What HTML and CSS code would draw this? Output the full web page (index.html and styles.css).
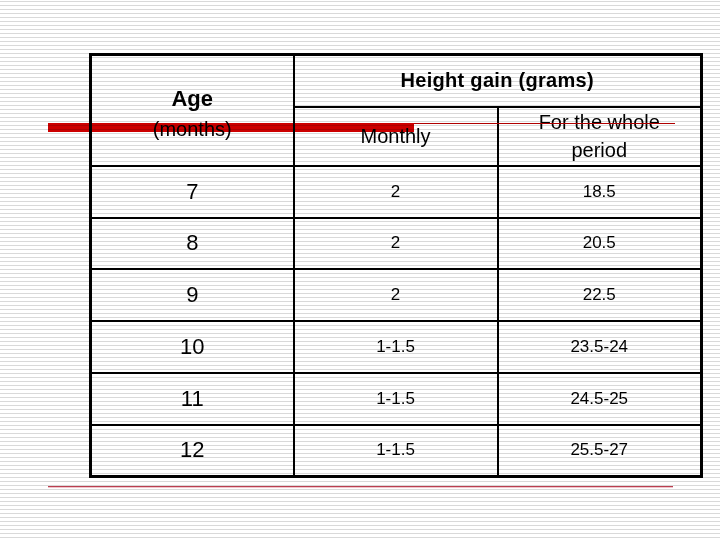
FILE: index.html
```html
<!DOCTYPE html>
<html>
<head>
<meta charset="utf-8">
<link rel="stylesheet" href="styles.css">
</head>
<body>
<div class="slide">
  <table class="gain">
    <colgroup><col class="c1"><col class="c2"><col class="c3"></colgroup>
    <thead>
      <tr class="h1">
        <th rowspan="2" class="age"><span class="age-t">Age</span><br><span class="age-s">(months)</span></th>
        <th colspan="2" class="title">Height gain (grams)</th>
      </tr>
      <tr class="h2">
        <th class="sub">Monthly</th>
        <th class="sub">For the whole<br>period</th>
      </tr>
    </thead>
    <tbody>
      <tr><td class="m">7</td><td>2</td><td>18.5</td></tr>
      <tr class="short"><td class="m">8</td><td>2</td><td>20.5</td></tr>
      <tr><td class="m">9</td><td>2</td><td>22.5</td></tr>
      <tr><td class="m">10</td><td>1-1.5</td><td>23.5-24</td></tr>
      <tr><td class="m">11</td><td>1-1.5</td><td>24.5-25</td></tr>
      <tr><td class="m">12</td><td>1-1.5</td><td>25.5-27</td></tr>
    </tbody>
  </table>
  <div class="bar-thick"></div>
  <div class="bar-thin"></div>
  <div class="bar-bottom"></div>
</div>
</body>
</html>
```
FILE: styles.css
```css
html, body {
  margin: 0;
  padding: 0;
}
body {
  width: 720px;
  height: 540px;
  overflow: hidden;
  background: repeating-linear-gradient(to bottom, #ffffff 0 1px, #d9d9d9 1px 2px, #ffffff 2px 4px);
  font-family: "Liberation Sans", Arial, sans-serif;
  color: #000;
}
.slide {
  position: relative;
  width: 720px;
  height: 540px;
  padding: 53px 0 0 89px;
  box-sizing: border-box;
}
.gain {
  border-collapse: collapse;
  table-layout: fixed;
  width: 611px;
  border: 3px solid #000;
}
.c1 { width: 203px; }
.c2 { width: 204px; }
.c3 { width: 204px; }
.gain th, .gain td {
  border: 2px solid #000;
  padding: 0;
  text-align: center;
  vertical-align: middle;
  font-weight: normal;
}
.h1 { height: 52px; }
.h2 { height: 59px; }
.gain tbody tr { height: 52px; }
.gain tbody tr.short { height: 51px; }
.gain th.age { line-height: 29px; padding-top: 28px; vertical-align: top; }
.age-t { font-size: 22px; font-weight: bold; }
.age-s { font-size: 20px; }
.gain th.title { font-size: 20px; font-weight: bold; letter-spacing: 0.3px; }
.sub { font-size: 20px; line-height: 28px; }
.gain td { font-size: 17px; }
.gain td.m { font-size: 22px; }
.bar-thick {
  position: absolute;
  left: 48px;
  top: 123px;
  width: 366px;
  height: 9px;
  background: #cc0000;
  mix-blend-mode: multiply;
}
.bar-thin {
  position: absolute;
  left: 414px;
  top: 123px;
  width: 261px;
  height: 1px;
  background: #b00000;
}
.bar-bottom {
  position: absolute;
  left: 48px;
  top: 486px;
  width: 625px;
  height: 1px;
  background: #b84050;
  box-shadow: 0 1px 0 #f2c4cc;
}
```
